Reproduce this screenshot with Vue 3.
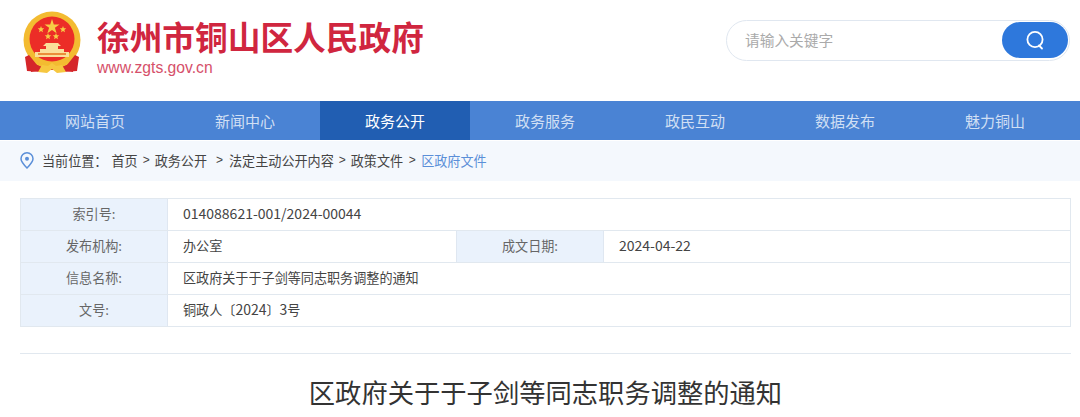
<script setup>
const navItems = [
  { label: '网站首页' },
  { label: '新闻中心' },
  { label: '政务公开', active: true },
  { label: '政务服务' },
  { label: '政民互动' },
  { label: '数据发布' },
  { label: '魅力铜山' },
]
</script>

<template>
  <div class="page">
    <header class="header">
      <div class="brand">
        <svg class="emblem" width="58" height="62" viewBox="0 0 58 62">
          <path d="M9 44 L7 52 L8 61 L20 59 L38 59 L50 61 L51 52 L49 44 Z" fill="#d5262a"/>
          <circle cx="29" cy="29" r="28.500" fill="#f3bb31"/>
          <circle cx="29" cy="28" r="22.500" fill="#ec2d27"/>
          <polygon points="29,8 30.800,13.400 36.500,13.400 31.900,16.800 33.600,22.200 29,18.900 24.400,22.200 26.100,16.800 21.500,13.400 27.200,13.400" fill="#f6cd46"/>
          <polygon points="18,15 18.900,17.300 21.200,17.300 19.400,18.900 20,21.300 18,19.900 16,21.300 16.600,18.900 14.800,17.300 17.100,17.300" fill="#f6cd46"/>
          <polygon points="40,15 40.900,17.300 43.200,17.300 41.400,18.900 42,21.300 40,19.900 38,21.300 38.600,18.900 36.800,17.300 39.100,17.300" fill="#f6cd46"/>
          <polygon points="25,22 25.900,24.300 28.200,24.300 26.400,25.900 27,28.300 25,26.900 23,28.300 23.600,25.900 21.800,24.300 24.100,24.300" fill="#f6cd46"/>
          <polygon points="33,22 33.900,24.300 36.200,24.300 34.400,25.900 35,28.300 33,26.900 31,28.300 31.600,25.900 29.800,24.300 32.100,24.300" fill="#f6cd46"/>
          <path d="M23 32 H35 L38 35 H35 V38 H41 V41 H46 V46 H12 V41 H17 V38 H23 V35 H20 Z" fill="#fadf9a"/>
          <rect x="15" y="42" width="28" height="2" fill="#eb8d3a"/>
          <path d="M7 46 Q29 62 51 46 L49 51 Q29 64 9 51 Z" fill="#f3bb31"/>
          <path d="M2 46 L6 44 L14 54 L20 57 L18 61 L4 60 Z" fill="#d5262a"/>
          <path d="M56 46 L52 44 L44 54 L38 57 L40 61 L54 60 Z" fill="#d5262a"/>
          <path d="M15 61 L19 54 L25 55 L29 52 L33 55 L39 54 L43 61 L34 62 L29 58 L24 62 Z" fill="#f6c740"/>
        </svg>
        <div class="brand-text">
          <div class="site-name">徐州市铜山区人民政府</div>
          <div class="site-url">www.zgts.gov.cn</div>
        </div>
      </div>
      <div class="search">
        <span class="placeholder">请输入关键字</span>
        <button class="search-btn" aria-label="搜索">
          <svg width="20" height="20" viewBox="0 0 20 20" fill="none" stroke="#fff" stroke-width="1.800">
            <circle cx="10" cy="9.500" r="7.600"/>
            <path d="M14 15.500 L17 18.500" stroke-linecap="round"/>
          </svg>
        </button>
      </div>
    </header>

    <nav class="nav">
      <a v-for="item in navItems" :key="item.label" class="nav-item" :class="{ active: item.active }">{{ item.label }}</a>
    </nav>

    <div class="crumbs">
      <svg class="pin" width="14" height="17" viewBox="0 0 14 17" fill="none" stroke="#5b8fd8" stroke-width="1.500">
        <path d="M7 16 C3.500 12.500 1 10 1 6.800 A6 6 0 0 1 13 6.800 C13 10 10.500 12.500 7 16 Z"/>
        <circle cx="7" cy="6.800" r="2" fill="#5b8fd8" stroke="none"/>
      </svg>
      <span class="crumb-label">当前位置：</span>
      <span>首页</span><i class="sep">&gt;</i>
      <span>政务公开</span><i class="sep wide">&gt;</i>
      <span>法定主动公开内容</span><i class="sep">&gt;</i>
      <span>政策文件</span><i class="sep last">&gt;</i>
      <span class="current">区政府文件</span>
    </div>

    <main class="content">
      <div class="meta">
        <div class="row">
          <div class="key">索引号:</div>
          <div class="val num">014088621-001/2024-00044</div>
        </div>
        <div class="row">
          <div class="key">发布机构:</div>
          <div class="val half">办公室</div>
          <div class="key">成文日期:</div>
          <div class="val num">2024-04-22</div>
        </div>
        <div class="row">
          <div class="key">信息名称:</div>
          <div class="val">区政府关于于子剑等同志职务调整的通知</div>
        </div>
        <div class="row">
          <div class="key">文号:</div>
          <div class="val">铜政人〔<span class="digits">2024</span>〕<span class="digits">3</span>号</div>
        </div>
      </div>
      <h1 class="title">区政府关于于子剑等同志职务调整的通知</h1>
    </main>
  </div>
</template>

<style>
html, body { margin: 0; background: #fff; overflow: hidden; }
</style>

<style scoped>
.page {
  width: 1080px;
  height: 417px;
  overflow: hidden;
  font-family: "Noto Sans CJK SC", "Liberation Sans", sans-serif;
  color: #333;
}
.header {
  height: 101px;
  box-sizing: border-box;
  padding: 11px 10px 0 23px;
  display: flex;
  justify-content: space-between;
  align-items: flex-start;
}
.brand { display: flex; gap: 16px; }
.emblem { display: block; }
.site-name {
  font-size: 32.700px;
  line-height: 50px;
  font-weight: 700;
  color: #d0263f;
}
.site-url {
  font-family: "Liberation Sans", sans-serif;
  font-size: 15.700px;
  line-height: 18px;
  color: #d6506a;
  margin-top: -2px;
}
.search {
  margin-top: 9px;
  width: 344px;
  height: 41px;
  box-sizing: border-box;
  border: 1px solid #e0e7f0;
  border-radius: 21px;
  padding: 1px 1px 0 18px;
  display: flex;
  justify-content: space-between;
  align-items: flex-start;
}
.placeholder { font-size: 14.700px; line-height: 36px; color: #aaa; }
.search-btn {
  width: 66px;
  height: 36px;
  border: 0;
  padding: 0;
  border-radius: 18px;
  background: #2e78dc;
  display: flex;
  align-items: center;
  justify-content: center;
}
.nav {
  height: 39px;
  padding-left: 20px;
  background: #4a83d4;
  display: flex;
}
.nav-item {
  width: 150px;
  font-size: 15px;
  line-height: 39px;
  text-align: center;
  color: rgba(255, 255, 255, .75);
}
.nav-item.active { background: #215eb2; color: #fff; }
.crumbs {
  margin-top: 1px;
  height: 40px;
  padding-bottom: 2px;
  box-sizing: border-box;
  padding-left: 20px;
  background: #f4f8fd;
  display: flex;
  align-items: center;
  font-size: 13.100px;
  color: #444;
}
.pin { margin-right: 8px; }
.crumb-label { margin-right: 4px; }
.sep {
  font-style: normal;
  font-family: "Liberation Sans", sans-serif;
  font-size: 12px;
  width: 17px;
  text-align: center;
}
.sep.last { width: 18px; }
.sep.wide { width: 22px; text-align: right; padding-right: 6px; box-sizing: border-box; }
.current { color: #5b8fd8; }
.content { padding: 17px 9px 0 20px; }
.meta {
  margin-bottom: 26px;
  border-left: 1px solid #e1e8ef;
}
.row {
  display: flex;
  height: 32px;
  box-sizing: border-box;
  border-top: 1px solid #e1e8ef;
  border-right: 1px solid #e1e8ef;
  font-size: 13.100px;
}
.row:nth-child(4) { height: 33px; border-bottom: 1px solid #e1e8ef; }
.key {
  width: 147px;
  flex: none;
  box-sizing: border-box;
  background: #eaf2fc;
  border-right: 1px solid #dfe7f1;
  text-align: center;
  line-height: 29px;
  color: #666;
}
.val {
  flex: 1;
  padding-left: 15px;
  line-height: 29px;
  color: #444;
}
.num { font-size: 14px; }
.digits { font-size: 14px; }
.val.half { flex: none; width: 289px; box-sizing: border-box; border-right: 1px solid #dfe7f1; }
.title {
  margin: 0;
  padding-top: 23px;
  border-top: 1px solid #e1e8ef;
  text-align: center;
  font-weight: 400;
  font-size: 26.300px;
  line-height: 30px;
  color: #333;
}
</style>
